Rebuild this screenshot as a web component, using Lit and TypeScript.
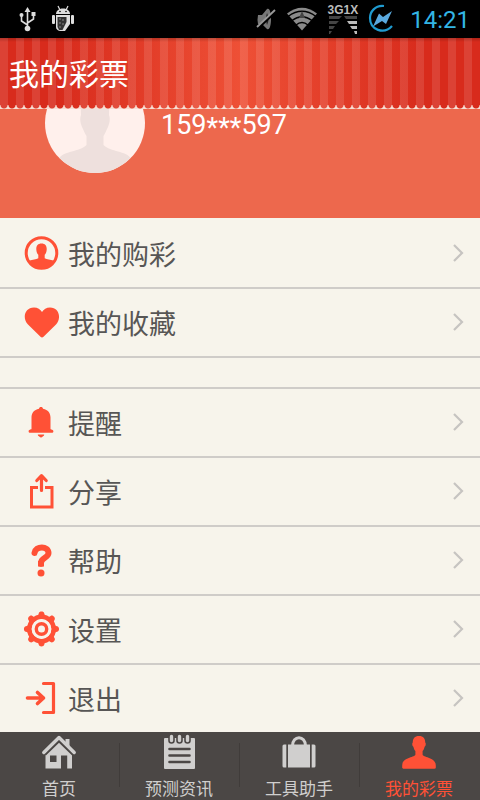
import { LitElement, html, svg, css, type TemplateResult } from "lit";
import { customElement, property } from "lit/decorators.js";

const icons: Record<string, TemplateResult> = {
  purchases: svg`<circle cx="18.500" cy="18" r="15.300" fill="none" stroke="currentColor" stroke-width="3"/>
    <path fill="currentColor" d="M18.500 8.500c3.800 0 5.400 2.400 5.200 5.900-.1 2.600-1 4.400-2 5.400v3.400c2 1.200 6 1.300 8.700 2.400C28.500 31.500 23.500 34 18.500 34S8.500 31.500 6.600 25.600c2.700-1.100 6.700-1.200 8.700-2.400v-3.400c-1-1-1.900-2.800-2-5.400-.2-3.500 1.400-5.900 5.200-5.900z"/>`,
  favourites: svg`<path fill="currentColor" d="M19 33.500c-.6 0-1-.3-1.500-.8L5 20.500C-1 14.500 1.500 3.500 11 3.500c3.500 0 6.500 2 8 4.500 1.500-2.500 4.500-4.500 8-4.500 9.500 0 11.500 11 6 17L20.500 32.700c-.5.500-.9.800-1.500.8z"/>`,
  bell: svg`<path fill="currentColor" d="M18 3c1.200 0 1.800.7 2 1.700 5 1 7.500 4.300 7.500 8.800v11.500c.4.800 2.900.4 2.900 2.300 0 1-.6 1.500-1.600 1.500H7.200c-1 0-1.600-.5-1.600-1.500 0-1.900 2.500-1.500 2.900-2.300V13.500C8.500 9 11 5.700 16 4.700c.2-1 .8-1.700 2-1.700zM14.800 30.600h6.400c0 1.600-1.200 1.600-1.700 2.200-.6.900-2.400.9-3 0-.5-.6-1.700-.6-1.700-2.200z"/>`,
  share: svg`<path fill="none" stroke="currentColor" stroke-width="3" d="M15 14.500H8.500V34h20.500V14.500H22"/>
    <path fill="none" stroke="currentColor" stroke-width="3.200" stroke-linecap="round" stroke-linejoin="round" d="M18.500 17.500V3M13.800 7.500L18.500 2.700l4.700 4.800"/>`,
  help: svg`<path fill="none" stroke="currentColor" stroke-width="6" stroke-linecap="round" d="M11.500 11C12.500 3.500 25.500 3.500 25.500 11c0 5-7.500 4.500-7.500 10"/>
    <path fill="currentColor" d="M15 19h6v5c0 1.200-6 1.200-6 0z"/><circle cx="18" cy="31" r="3.500" fill="currentColor"/>`,
  gear: svg`<g fill="currentColor">${[0, 45, 90, 135, 180, 225, 270, 315].map(
      (a) => svg`<path transform="rotate(${a} 18.500 18)" d="M11 7.500C14.500 6 15.300 4.800 15.700 2.400c.4-2.600 5.200-2.600 5.600 0 .4 2.400 1.200 3.600 4.700 5.100z"/>`
    )}</g><circle cx="18.500" cy="18" r="12.200" fill="none" stroke="currentColor" stroke-width="4.600"/>
    <circle cx="18.500" cy="18" r="9.700" fill="#f7f4eb"/>
    <circle cx="18.500" cy="18" r="5.200" fill="none" stroke="currentColor" stroke-width="3.400"/>`,
  exit: svg`<path fill="none" stroke="currentColor" stroke-width="3.200" stroke-linejoin="round" stroke-linecap="round" d="M20.500 3.500h10v29H20.500"/>
    <path fill="none" stroke="currentColor" stroke-width="3.600" stroke-linejoin="round" stroke-linecap="round" d="M4.500 18h16M14.500 12.500L20.500 18l-6 5.500"/>`,
  home: svg`<path fill="currentColor" d="M18 4.500L31 17.500V34.500h-4.800V21.500h-6.200V34.500H4.500V17.500zM9 21.500v6.500h6.500v-6.500z" fill-rule="evenodd"/>
    <path fill="none" stroke="#4b4745" stroke-width="5.400" d="M3 19.500L18 5l15 14.500"/>
    <path fill="none" stroke="currentColor" stroke-width="3.400" stroke-linecap="round" stroke-linejoin="round" d="M2.800 18.500L18 3.500l15.200 15"/>
    <path fill="currentColor" d="M24.500 5h4v10l-4-4z"/>`,
  news: svg`<rect x="3" y="4" width="31" height="31" rx="1" fill="currentColor"/>
    <g stroke="#4b4745" stroke-width="2.600" stroke-linecap="round"><path d="M8.500 15h20M8.500 21.500h20M8.500 28h20"/></g>
    <g fill="currentColor" stroke="#4b4745" stroke-width="1.600"><rect x="8" y="0" width="5" height="9" rx="2.500"/><rect x="16" y="0" width="5" height="9" rx="2.500"/><rect x="24" y="0" width="5" height="9" rx="2.500"/></g>`,
  tools: svg`<path fill="currentColor" d="M3 10.500h2.300v23H3q-1.500 0-1.500-1.500V12q0-1.500 1.500-1.500zM7 10.500h22v23H7zM30.700 10.500H33q1.500 0 1.500 1.500v20q0 1.500-1.500 1.500h-2.300z"/>
    <path fill="none" stroke="currentColor" stroke-width="3" d="M11.500 12c0-11 13-11 13 0"/>`,
  person: svg`<path fill="currentColor" d="M18 2c4.500 0 6.300 2.800 6.200 6.500.9.300.7 3.600-.6 4.300-.4 2-1 3.200-2 4.200v3.500c0 3 13.200 2.500 13.200 11v2c0 .8-.5 1.200-1.300 1.200h-31c-.8 0-1.300-.4-1.300-1.200v-2c0-8.500 13.200-8 13.200-11V17c-1-1-1.600-2.200-2-4.200-1.300-.7-1.500-4-.6-4.300C11.700 4.800 13.500 2 18 2z"/>`,
};

const icon = (name: string) =>
  html`<svg class="icon" width="36" height="36" viewBox="0 0 36 36" aria-hidden="true">${icons[name]}</svg>`;

@customElement("status-bar")
class StatusBar extends LitElement {
  static styles = css`
    :host {
      display: flex;
      align-items: center;
      height: 38px;
      flex: none;
      padding: 0 10px 0 17px;
      background: #000;
      color: #33b5e5;
      font-family: Roboto, sans-serif;
      font-size: 24px;
    }
    svg { flex: none; }
    .left, .right { display: flex; align-items: center; gap: 10px; }
    .left { gap: 12px; flex: 1; }
    .signal { display: flex; flex-direction: column; align-items: center; color: #bbb; font: bold 12px/12px "Liberation Sans", sans-serif; }
    .clock { margin-left: 6px; padding-top: 2px; }
  `;
  render() {
    return html`
      <div class="left">
        <svg width="22" height="26" viewBox="0 0 22 26" fill="none" stroke="#ddd" stroke-width="1.600">
          <path d="M10.500 22V5M10.500 19l-6-4V9M10.500 17l6-4V8"/>
          <g fill="#ddd" stroke="none"><path d="M10.500 1l3 5h-6z"/><circle cx="10.500" cy="22.500" r="2.800"/><circle cx="4.500" cy="9" r="2"/><path d="M14.500 6h4v4h-4z"/></g>
        </svg>
        <svg width="24" height="28" viewBox="0 0 24 28">
          <g fill="#ddd"><path d="M5 9c0-3 2.500-5.500 7-5.500S19 6 19 9z"/><rect x="1" y="10" width="3" height="9" rx="1"/><rect x="20" y="10" width="3" height="9" rx="1"/><path d="M5 10h14v9l-5 7H9q-4-1-4-4z"/></g>
          <path d="M7 1l2 4M17 1l-2 4" stroke="#ddd" stroke-width="1.200"/>
          <path d="M6.500 12h9v5l-4 8H8l-1.500-3z" fill="#333"/>
          <g fill="#aaa"><circle cx="9" cy="14" r=".7"/><circle cx="12" cy="15" r=".7"/><circle cx="9" cy="18" r=".7"/><circle cx="12" cy="19" r=".7"/><circle cx="9" cy="22" r=".7"/></g>
          <g fill="#000"><circle cx="9" cy="6.500" r=".8"/><circle cx="15" cy="6.500" r=".8"/></g>
        </svg>
      </div>
      <div class="right">
        <svg width="20" height="24" viewBox="0 0 20 24"><path fill="#777" d="M2 8h4l5-6c3-2 4 5 4 10s-1 12-4 10l-5-5H2q-1-4 0-9z"/><path fill="#222" d="M11 6q3 6 0 12-2-6 0-12z"/><path d="M2 21L20 4" stroke="#000" stroke-width="3"/><path d="M1 20L19 3" stroke="#999" stroke-width="1.800"/></svg>
        <svg width="32" height="24" viewBox="0 0 32 24"><path fill="#8a8a8a" d="M1 6.500Q16-5 31 6.500L16 23.500z"/><g fill="none" stroke="#000" stroke-width="1.400"><path d="M2 9.500Q16-1 30 9.500M6 13.500q10-7.500 20 0M10 18q6-5 12 0"/></g><path fill="#444" d="M13 11l3-7 3 7z"/></svg>
        <div class="signal"><span>3G1X</span>
          <svg width="30" height="18" viewBox="0 0 30 18"><g fill="#444"><path d="M1 0h13l-3 3H1zM1 5h10l-3 3H1zM1 10h6l-2 3H1zM1 15h3l-2 3H1z"/><path d="M16 0h13v3H18z"/></g><g fill="#bbb"><path d="M19 5h10v3H21zM22 10h7v3h-5zM26 15h3v3h-2z"/></g></svg>
        </div>
        <svg width="26" height="30" viewBox="0 0 26 30"><path d="M16 2C7 1 2 8 2 14c0 12 14 17 22 8" fill="none" stroke="#1f9bd0" stroke-width="2.200"/><path fill="#5aa9de" d="M5 22.500L11 9.500l4 3.500 9-6-6 13-4-3z"/></svg>
        <span class="clock">14:21</span>
      </div>`;
  }
}

@customElement("menu-row")
class MenuRow extends LitElement {
  @property() icon = "";
  @property() label = "";
  static styles = css`
    :host { display: block; }
    .row {
      display: flex;
      align-items: center;
      width: 100%;
      height: 67px;
      padding: 0 16px 2px 23px;
      border: 0;
      background: none;
      color: #575655;
      font: 27px/36px Roboto, "Noto Sans CJK SC", sans-serif;
      text-align: left;
      cursor: pointer;
    }
    .icon { color: #ff5136; margin-right: 9px; flex: none; }
    .label { flex: 1; padding-top: 6px; }
  `;
  render() {
    return html`<button class="row">
      ${icon(this.icon)}<span class="label">${this.label}</span>
      <svg width="12" height="18" viewBox="0 0 12 18" fill="none" stroke="#c6c4c1" stroke-width="2.200"><path d="M2 1l8 8-8 8"/></svg>
    </button>`;
  }
}

@customElement("app-root")
class AppRoot extends LitElement {
  static styles = css`
    :host {
      display: flex;
      flex-direction: column;
      min-height: 100vh;
      background: #f7f4eb;
      font-family: Roboto, "Noto Sans CJK SC", sans-serif;
    }
    .header {
      display: flex;
      flex: none;
      align-items: center;
      height: 71px;
      box-sizing: border-box;
      padding: 2px 9px 0;
      background:
        linear-gradient(#0003, transparent 4px),
        radial-gradient(circle at 50% 0, transparent 3px, #f6ddd3 4px) 0 100% / 8px 4px repeat-x,
        repeating-linear-gradient(90deg, #ffffff1c 0 8px, transparent 8px 16px),
        linear-gradient(90deg, #d82b1c 12%, #ee5036 50%, #d82b1c 88%);
    }
    .title { margin: 0; color: #fff; font-size: 30px; line-height: 40px; font-weight: 400; }
    .content { flex: 1; overflow: hidden; }
    .profile {
      display: flex;
      align-items: center;
      gap: 16px;
      margin-top: -81px;
      padding: 45px;
      background: #ed684d;
      color: #fff;
      font-size: 27px;
      line-height: 24px;
    }
    .avatar { border-radius: 50%; flex: none; }
    .phone { padding-top: 3px; }
    .mask { vertical-align: -3px; line-height: 16px; }
    .list { list-style: none; margin: 0; padding: 0; }
    .item { border-bottom: 2px solid #cfccc8; }
    .first { padding-top: 2px; }
    .second { margin-top: 29px; border-top: 2px solid #cfccc8; }
    .second .item:last-child { border-bottom: 0; }
    .tabs { display: flex; flex: none; height: 68px; background: #4b4745; position: sticky; bottom: 0; }
    .tab {
      flex: 1 1 0;
      box-sizing: border-box;
      width: 25%;
      display: flex;
      flex-direction: column;
      align-items: center;
      gap: 10px;
      padding: 2px 2px 0 0;
      color: #d0cfce;
      font-size: 17px;
      line-height: 18px;
      text-decoration: none;
      background: linear-gradient(#403c3a, #403c3a) 100% 11px / 1px 44px no-repeat;
    }
    .tab:last-child { background: none; }
    .active { color: #ff5136; }
  `;
  render() {
    const rows = (items: string[][]) =>
      items.map(([i, l]) => html`<li class="item"><menu-row icon=${i} label=${l}></menu-row></li>`);
    const tabs = [["home", "首页"], ["news", "预测资讯"], ["tools", "工具助手"], ["person", "我的彩票"]];
    return html`
      <status-bar></status-bar>
      <header class="header"><h1 class="title">我的彩票</h1></header>
      <main class="content">
        <section class="profile">
          <svg class="avatar" width="100" height="100" viewBox="0 0 100 100" aria-hidden="true">
            <rect width="100" height="100" fill="#fff0ec"/>
            <path fill="#eee0dd" d="M50 12c11 0 15 9 14 30 1.500 4 .5 8-1 12-2 4-3 7-4.500 9v9c7 7 23 6 27 13v15H14.500V85c4-7 20-6 27-13v-9c-1.500-2-2.500-5-4.500-9-1.500-4-2.500-8-1-12-1-21 3-30 14-30z"/>
          </svg>
          <span class="phone">159<span class="mask">***</span>597</span>
        </section>
        <ul class="list first">${rows([["purchases", "我的购彩"], ["favourites", "我的收藏"]])}</ul>
        <ul class="list second">${rows([["bell", "提醒"], ["share", "分享"], ["help", "帮助"], ["gear", "设置"], ["exit", "退出"]])}</ul>
      </main>
      <nav class="tabs">
        ${tabs.map(([i, l]) => html`<a class="tab ${i === "person" ? "active" : ""}" href="#${i}">${icon(i)}<span>${l}</span></a>`)}
      </nav>`;
  }
}
